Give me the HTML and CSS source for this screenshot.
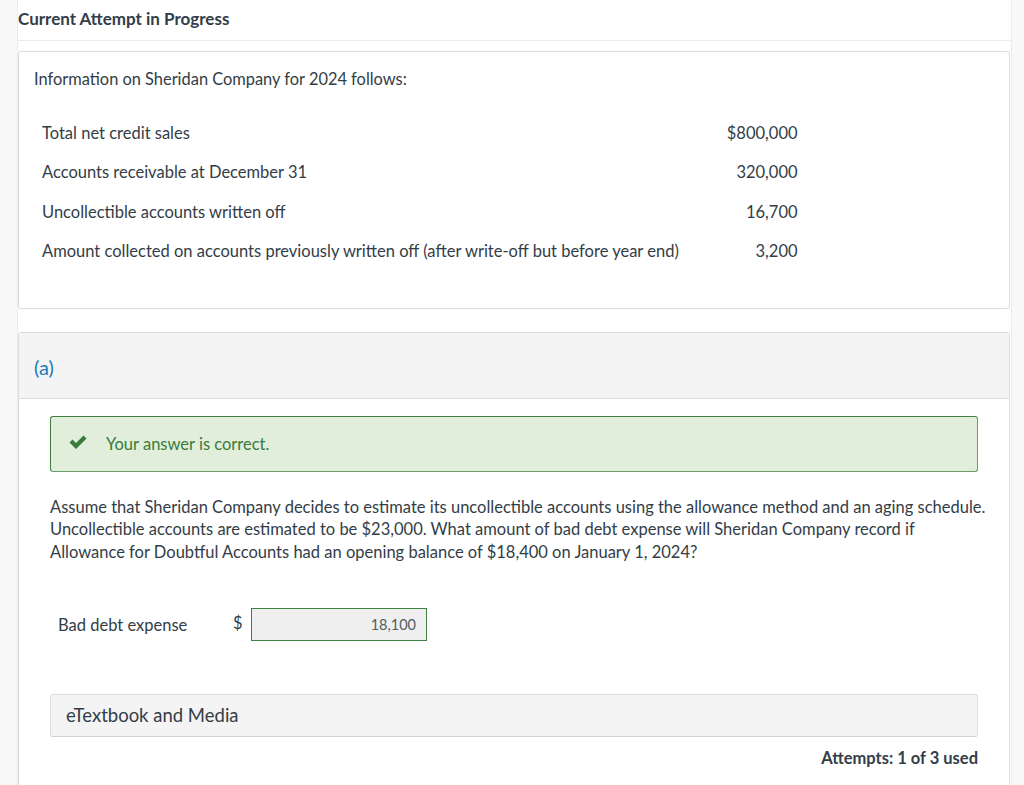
FILE: index.html
```html
<!DOCTYPE html>
<html>
<head>
<meta charset="utf-8">
<link rel="stylesheet" href="styles.css">
</head>
<body>
<div class="page">
  <div class="side side-left"></div>
  <main class="main">
    <h1 class="title">Current Attempt in Progress</h1>
    <section class="info">
      <p class="intro">Information on Sheridan Company for 2024 follows:</p>
      <table class="data">
        <tr><td>Total net credit sales</td><td class="num">$800,000</td></tr>
        <tr><td>Accounts receivable at December 31</td><td class="num">320,000</td></tr>
        <tr><td>Uncollectible accounts written off</td><td class="num">16,700</td></tr>
        <tr><td>Amount collected on accounts previously written off (after write-off but before year end)</td><td class="num">3,200</td></tr>
      </table>
    </section>
    <section class="part">
      <div class="part-head">(a)</div>
      <div class="part-body">
        <div class="correct">
          <svg class="check" width="20" height="16" viewBox="0 0 20 16"><path d="M1.5 8.5 L4.5 5.5 L8 9 L15.5 1.5 L18.5 4.5 L8 15 Z" fill="#3a7a3a"/></svg>
          <span>Your answer is correct.</span>
        </div>
        <p class="question">Assume that Sheridan Company decides to estimate its uncollectible accounts using the allowance method and an aging schedule. Uncollectible accounts are estimated to be $23,000. What amount of bad debt expense will Sheridan Company record if Allowance for Doubtful Accounts had an opening balance of $18,400 on January 1, 2024?</p>
        <div class="answer-row">
          <span class="answer-label">Bad debt expense</span>
          <span class="dollar">$</span>
          <div class="answer-input">18,100</div>
        </div>
        <div class="media">eTextbook and Media</div>
        <div class="attempts">Attempts: 1 of 3 used</div>
      </div>
    </section>
  </main>
  <div class="side side-right"></div>
</div>
</body>
</html>
```
FILE: styles.css
```css
html, body {
  margin: 0;
  padding: 0;
  background: #ffffff;
  font-family: Lato, "Open Sans", sans-serif;
  color: #333d47;
}
.page {
  display: flex;
  height: 785px;
  overflow: hidden;
}
.side {
  background: #f8f8f8;
}
.side-left {
  width: 17px;
  border-right: 1px solid #ececec;
}
.side-right {
  flex: 1;
  border-left: 1px solid #ececec;
}
.main {
  width: 993px;
  box-sizing: border-box;
  display: flex;
  flex-direction: column;
}
.title {
  margin: 0;
  font-size: 17px;
  font-weight: 700;
  line-height: 20px;
  padding: 9px 0 11px 0;
  border-bottom: 1px solid #ececec;
  margin-bottom: 10px;
}
.info {
  border: 1px solid #dcdcdc;
  border-radius: 3px;
  padding: 17px 16px 47px 15px;
  width: 992px;
  box-sizing: border-box;
}
.intro {
  margin: 0 0 34px 0;
  font-size: 16.4px;
  line-height: 20px;
}
.data {
  border-collapse: collapse;
  margin-left: 8px;
}
.data td {
  font-size: 16.5px;
  line-height: 20px;
  padding: 0 0 19.3px 0;
  white-space: nowrap;
}
.data tr:last-child td {
  padding-bottom: 0;
}
.data td.num {
  text-align: right;
  padding-left: 48px;
  width: 70px;
}
.part {
  margin-top: 23px;
  border: 1px solid #dcdcdc;
  border-bottom: none;
  border-radius: 3px 3px 0 0;
  width: 992px;
  box-sizing: border-box;
  flex: 1;
}
.part-head {
  background: #f4f4f4;
  height: 66px;
  box-sizing: border-box;
  border-bottom: 1px solid #dcdcdc;
  padding: 22px 0 0 15px;
  font-size: 20px;
  line-height: 24px;
  color: #1a7ab8;
}
.part-body {
  padding: 17px 31px 0 31px;
}
.correct {
  display: flex;
  align-items: center;
  height: 56px;
  box-sizing: border-box;
  background: #e0eedb;
  border: 1px solid #3f7f3f;
  border-bottom-color: #6a9c6a;
  border-right-color: #6a9c6a;
  border-radius: 3px;
  padding-left: 17px;
  color: #3a7a3a;
  font-size: 16.5px;
}
.check {
  margin-right: 18px;
  margin-top: -3px;
}
.question {
  margin: 24px -12px 0 0;
  font-size: 16.5px;
  line-height: 22.5px;
}
.answer-row {
  display: flex;
  align-items: center;
  margin-top: 45px;
  padding-left: 8px;
}
.answer-label {
  font-size: 16.5px;
  width: 175px;
}
.dollar {
  font-size: 16.5px;
  width: 18px;
  margin-top: -4px;
}
.answer-input {
  width: 176px;
  height: 33px;
  box-sizing: border-box;
  background: #efefef;
  border: 1px solid #3f7f3f;
  text-align: right;
  padding-right: 10px;
  line-height: 31px;
  font-size: 14.5px;
  color: #555b62;
}
.media {
  margin-top: 53px;
  height: 43px;
  box-sizing: border-box;
  background: #f4f4f4;
  border: 1px solid #dcdcdc;
  border-bottom-color: #d2d2d2;
  border-radius: 3px;
  padding-left: 15px;
  font-size: 18.5px;
  line-height: 41px;
  color: #333d47;
}
.attempts {
  text-align: right;
  font-weight: 700;
  font-size: 16.5px;
  line-height: 20px;
  margin-top: 11px;
}
```
